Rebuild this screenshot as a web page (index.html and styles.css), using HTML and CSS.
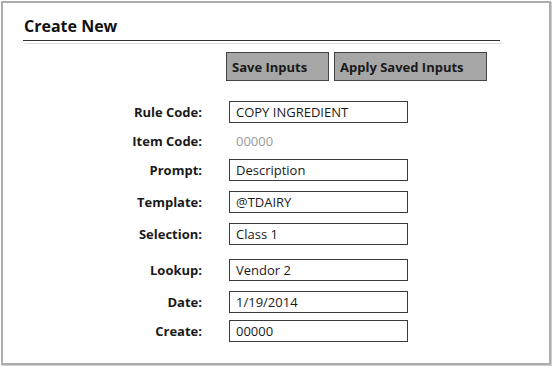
FILE: index.html
```html
<!DOCTYPE html>
<html lang="en">
<head>
  <meta charset="UTF-8">
  <title>Create New</title>
  <link rel="stylesheet" href="styles.css">
</head>
<body>
  <div class="panel">
    <h1 class="title">Create New</h1>
    <div class="title-shade"></div>

    <div class="actions">
      <button class="btn btn-save">Save Inputs</button>
      <button class="btn btn-apply">Apply Saved Inputs</button>
    </div>

    <div class="form">
      <div class="row row-first">
        <label>Rule Code:</label>
        <input type="text" value="COPY INGREDIENT">
      </div>
      <div class="row row-near">
        <label>Item Code:</label>
        <span class="static">00000</span>
      </div>
      <div class="row row-near">
        <label>Prompt:</label>
        <input type="text" value="Description">
      </div>
      <div class="row">
        <label>Template:</label>
        <input type="text" value="@TDAIRY">
      </div>
      <div class="row">
        <label>Selection:</label>
        <input type="text" value="Class 1">
      </div>
      <div class="row row-wide">
        <label>Lookup:</label>
        <input type="text" value="Vendor 2">
      </div>
      <div class="row">
        <label>Date:</label>
        <input type="text" value="1/19/2014">
      </div>
      <div class="row row-near">
        <label>Create:</label>
        <input type="text" value="00000">
      </div>
    </div>
  </div>
</body>
</html>
```

FILE: styles.css
```css
body {
  margin: 0;
  background-color: #fff;
  font-family: 'Open Sans', sans-serif;
  color: #1a1a1a;
}

.panel {
  box-sizing: border-box;
  width: 550px;
  height: 364px;
  margin: 1px;
  border: 2px solid #acacac;
  box-shadow: 1px 1px 0 #d0d0d0;
  padding: 0 49px 0 20px;
}

.title {
  margin: 0;
  padding: 12px 0 3px 1px;
  font-size: 16px;
  font-weight: bold;
  line-height: 22px;
  color: #111;
  border-bottom: 1px solid #333;
}

.title-shade {
  margin: 2px -3px 0 2px;
  border-top: 1px solid #ddd;
}

.actions {
  display: flex;
  gap: 5px;
  margin: 8px 0 0 203px;
}

.btn {
  box-sizing: border-box;
  height: 29px;
  padding: 0 0 0 5px;
  text-align: left;
  font-family: 'Open Sans', sans-serif;
  font-size: 13px;
  font-weight: bold;
  color: #1a1a1a;
  background-color: #a6a6a6;
  border: 1px solid #444;
  border-radius: 0;
}

.btn-save {
  width: 103px;
}

.btn-apply {
  width: 153px;
}

.form {
  display: flex;
  flex-direction: column;
}

.row {
  display: grid;
  grid-template-columns: 179px 179px;
  column-gap: 27px;
  align-items: center;
  height: 22px;
  margin-top: 10px;
}

.row-first {
  margin-top: 20px;
}

.row-near {
  margin-top: 7px;
}

.row-wide {
  margin-top: 14px;
}

.row label {
  text-align: right;
  font-size: 13px;
  font-weight: bold;
  color: #1a1a1a;
}

.row input {
  box-sizing: border-box;
  width: 179px;
  height: 22px;
  margin: 0;
  padding: 0 6px;
  font-family: 'Open Sans', sans-serif;
  font-size: 13px;
  color: #1a1a1a;
  background-color: #fff;
  border: 1px solid #3a3a3a;
  border-radius: 0;
  outline: none;
}

.static {
  padding-left: 7px;
  font-size: 13px;
  color: #999;
}
```
